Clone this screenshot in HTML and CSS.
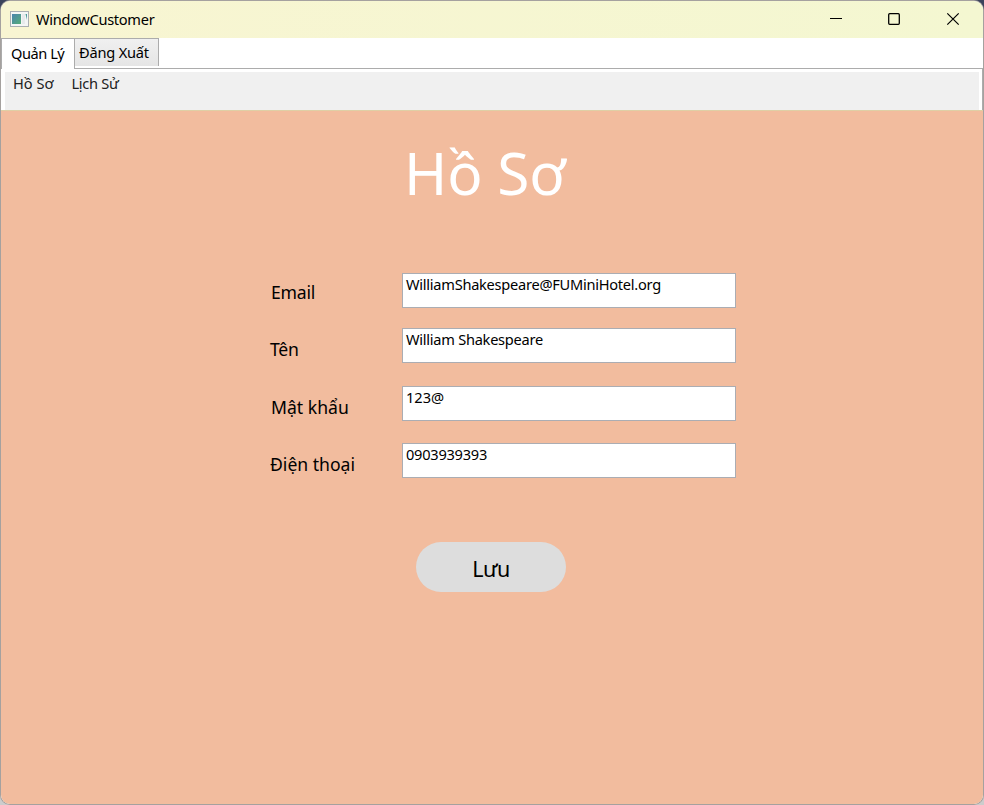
FILE: index.html
```html
<!DOCTYPE html>
<html lang="vi">
<head>
<meta charset="utf-8">
<title>WindowCustomer</title>
<link rel="stylesheet" href="styles.css">
</head>
<body>
<div class="window">
  <header class="titlebar">
    <svg class="app-icon" width="19" height="16" viewBox="0 0 19 16">
      <defs><linearGradient id="g" x1="0" y1="0" x2="1" y2="1"><stop offset="0" stop-color="#4a83ae"/><stop offset="1" stop-color="#55ad78"/></linearGradient></defs>
      <rect x=".5" y=".5" width="18" height="15" fill="#f3f5f5" stroke="#a9aeb2"/>
      <rect x="2" y="3" width="9" height="10" fill="url(#g)"/>
      <rect x="12" y="3" width="3" height="10" fill="#e6e9ec"/>
      <path d="M15.5 3H17v6z" fill="#4d9a9a"/>
    </svg>
    <span class="title">WindowCustomer</span>
    <svg class="controls" width="128" height="14" viewBox="0 0 128 14" fill="none" stroke="#000">
      <path d="M0 6.5h12" stroke-width="1"/>
      <rect x="58.7" y="1.7" width="10.6" height="10.6" rx="1" stroke-width="1.3"/>
      <path d="M117.3 1.3l11.4 11.4M128.7 1.3l-11.4 11.4" stroke-width="1.2"/>
    </svg>
  </header>
  <nav class="tabs">
    <div class="tab active">Quản Lý</div>
    <div class="tab exit">Đăng Xuất</div>
  </nav>
  <div class="tab-panel">
    <div class="menu"><span class="menu-profile">Hồ Sơ</span><span class="menu-history">Lịch Sử</span></div>
  </div>
  <main class="content">
    <h1>Hồ Sơ</h1>
    <form class="form">
      <label class="l-email">Email</label><div class="field f-email">WilliamShakespeare@FUMiniHotel.org</div>
      <label class="l-name">Tên</label><div class="field f-name">William Shakespeare</div>
      <label class="l-pass">Mật khẩu</label><div class="field f-pass">123@</div>
      <label class="l-phone">Điện thoại</label><div class="field f-phone">0903939393</div>
    </form>
    <button class="save" type="button">Lưu</button>
  </main>
</div>
</body>
</html>
```
FILE: styles.css
```css
* { box-sizing: border-box; }
body {
  margin: 0;
  width: 984px;
  height: 805px;
  overflow: hidden;
  padding: 1px;
  font: 14.6px/20px "Noto Sans", "Open Sans", sans-serif;
  color: #000;
  background: linear-gradient(#3b435c 0 33px, #aaa 33px 700px, #ccc 790px);
}
.window {
  width: 982px;
  height: 803px;
  border-radius: 9px;
  overflow: hidden;
  background: #fff;
  box-shadow: 0 0 0 1px #a5a19f;
  display: flex;
  flex-direction: column;
}
.titlebar {
  height: 37px;
  flex: none;
  display: flex;
  align-items: center;
  padding: 0 25px 2px 9px;
  background: linear-gradient(90deg, #f8f5d2, #f4f7d1);
}
.app-icon { margin-top: 1px; }
.title { margin-left: 7px; letter-spacing: -.3px; }
.controls { margin-left: auto; overflow: visible; }
.tabs { height: 31px; flex: none; display: flex; border-bottom: 1px solid #acacac; }
.tab { white-space: nowrap; letter-spacing: -.2px; }
.tab.active {
  width: 74px;
  height: 31px;
  padding: 4px 0 0 9px;
  border: 1px solid #acacac;
  border-bottom: 0;
  background: #fff;
  letter-spacing: -.45px;
}
.tab.exit {
  width: 84px;
  height: 28px;
  padding: 3px 0 0 4px;
  border: 1px solid #acacac;
  border-left: 0;
  border-bottom: 0;
  background: linear-gradient(#f0f0f0, #e5e5e5);
}
.tab-panel { height: 41px; flex: none; padding: 3px 3px 0 4px; border-right: 1px solid #acacac; }
.menu { height: 38px; padding: 1px 0 0 8px; background: #f0f0f0; color: #212121; display: flex; gap: 18px; }
.menu-history { letter-spacing: -.3px; }
.content { flex: 1; background: #f2bc9e; border-top: 1px solid #dfcfa5; }
h1 {
  margin: 21px 0 0 403px;
  font-size: 58.5px;
  line-height: 80px;
  font-weight: 400;
  color: #fff;
  letter-spacing: -.2px;
}
.form {
  margin: 61px 0 0 269px;
  display: grid;
  grid-template-columns: 132px 334px;
  grid-template-rows: 55px 58px 57px 35px;
}
label { font-size: 17.6px; line-height: 24px; padding-top: 7px; }
.l-email, .l-pass { padding-left: 1px; }
.l-email, .l-name { letter-spacing: -.2px; }
.l-name, .l-pass, .l-phone { padding-top: 9px; }
.field {
  height: 35px;
  border: 1px solid #abadb3;
  background: #fff;
  padding: 0 3px;
  white-space: nowrap;
}
.f-email, .f-name { letter-spacing: -.26px; }
.f-phone { letter-spacing: -.25px; }
.save {
  display: block;
  width: 150px;
  height: 50px;
  margin: 64px 0 0 415px;
  padding: 3px 0 0;
  border: 0;
  border-radius: 25px;
  background: #ddd;
  color: #000;
  font: 21.5px/28px "Noto Sans", sans-serif;
  letter-spacing: -.5px;
}
```
